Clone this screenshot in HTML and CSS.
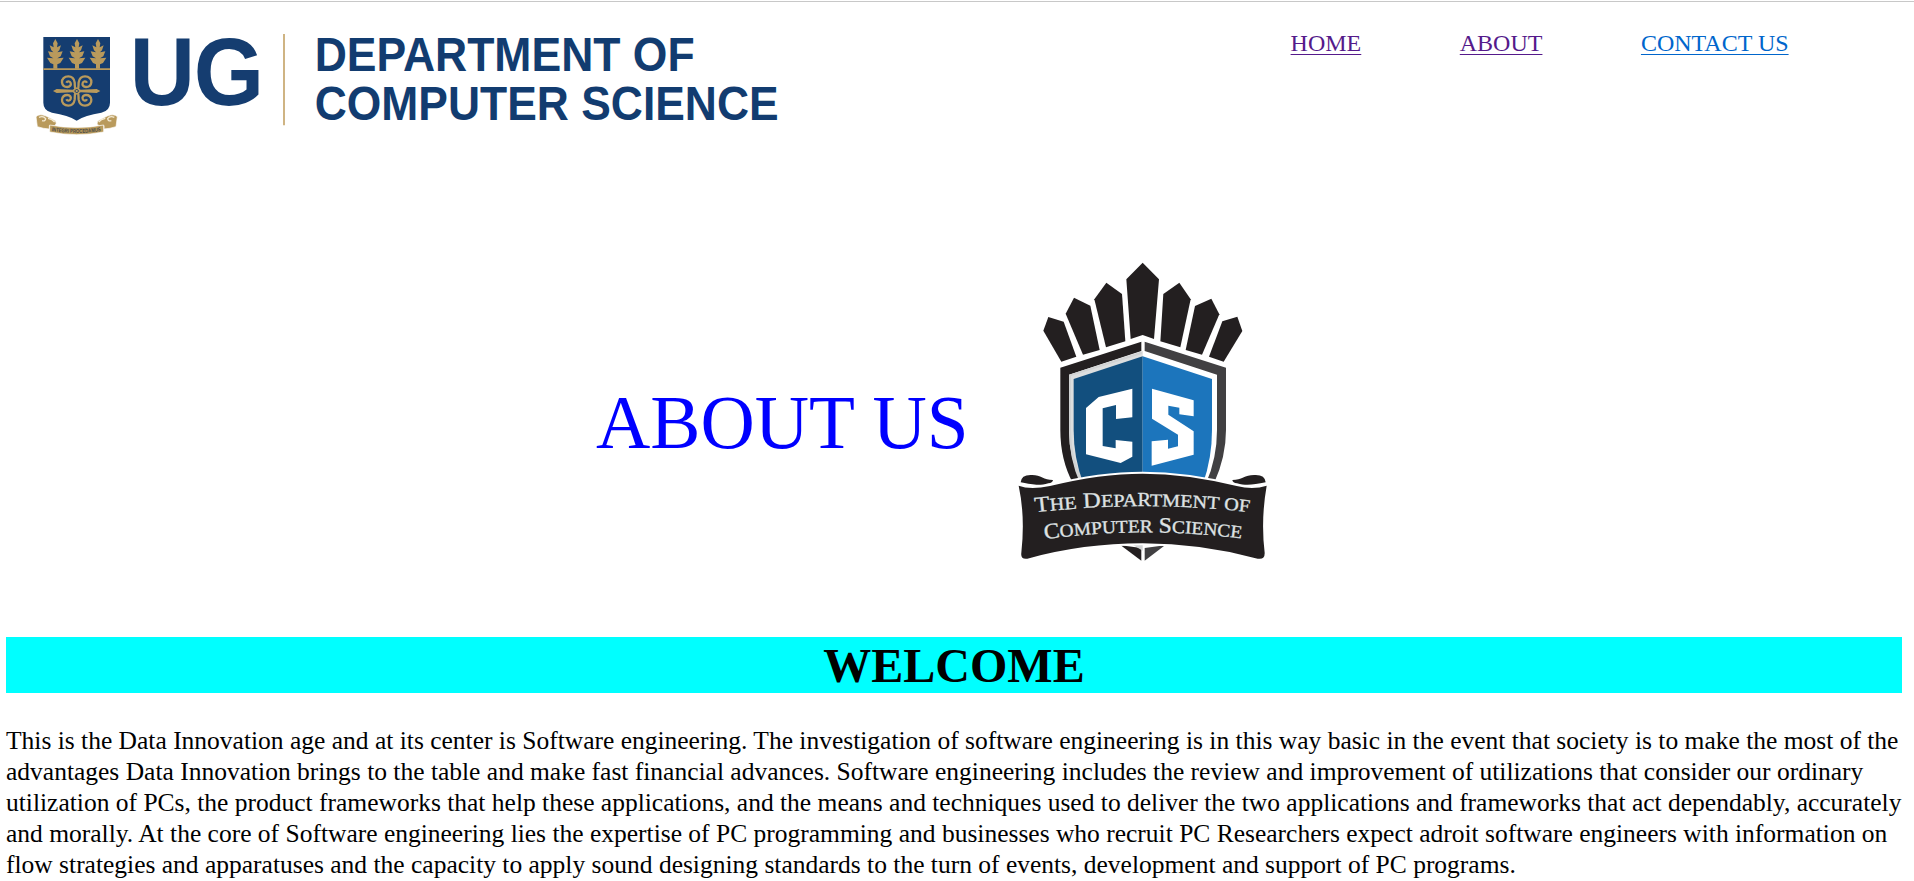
FILE: index.html
```html
<!DOCTYPE html>
<html lang="en">
<head>
<meta charset="utf-8">
<title>About Us</title>
<link rel="stylesheet" href="styles.css">
</head>
<body>
<header class="top">
  <svg class="brand" viewBox="0 0 2400 450" role="img" aria-label="UG Department of Computer Science">
    <path fill="#153d70" d="M130 111H330V308Q330 332 304 338Q255 345 230 362Q205 345 156 338Q130 332 130 308Z"/>
    <path fill="#b99a5c" d="M130 205H330V210H130Z"/>
    <defs>
      <g id="tree" fill="#b99a5c">
        <path d="M0 117L7 130L5 142L17 136L12 151L6 157L22 154L16 169L6 175L25 173L15 189L6 193V206H-6V193L-15 189L-25 173L-6 175L-16 169L-22 154L-6 157L-12 151L-17 136L-5 142L-7 130Z"/>
      </g>
      <path id="curl" d="M3 -4C7 -10 5 -18 6 -26C8 -38 16 -44 25 -44C37 -44 45 -36 44 -26C43 -17 36 -12 28 -12C20 -12 16 -18 18 -24C20 -30 28 -31 31 -25" fill="none" stroke="#b99a5c" stroke-width="7"/>
    </defs>
    <use href="#tree" x="166"/><use href="#tree" x="231"/><use href="#tree" x="294"/>
    <g transform="translate(230 273)">
      <use href="#curl"/><use href="#curl" transform="scale(-1 1)"/>
      <use href="#curl" transform="scale(1 -1)"/><use href="#curl" transform="scale(-1 -1)"/>
      <path d="M-71 0L-60 -6L-12 -4L0 -11L12 -4L60 -6L71 0L60 6L12 4L0 11L-12 4L-60 6Z" fill="#b99a5c"/>
      <path d="M0 -6L6 0L0 6L-6 0Z" fill="#b99a5c" stroke="#153d70" stroke-width="3"/>
    </g>
    <g stroke="#fff" stroke-width="2">
      <path fill="#b99a5c" d="M108 350Q118 340 138 348L166 362Q172 370 164 378L148 377V387Q130 386 112 380Z"/>
      <path fill="#b99a5c" d="M352 350Q342 340 322 348L294 362Q288 370 296 378L312 377V387Q330 386 348 380Z"/>
      <path fill="#b99a5c" d="M149 375Q230 390 311 375V396Q230 412 149 396Z"/>
    </g>
    <path d="M117 352Q130 346 137 356Q136 365 126 362M343 352Q330 346 323 356Q324 365 334 362M144 355Q157 357 164 366M316 355Q303 357 296 366" fill="none" stroke="#f4ead3" stroke-width="4"/>
    <path id="motto" fill="none" d="M155 393Q230 405 306 393"/>
    <text class="motto"><textPath href="#motto" textLength="148" lengthAdjust="spacingAndGlyphs">INTEGRI PROCEDAMUS</textPath></text>
    <text class="ug" x="0" y="0" transform="translate(389 315) scale(.935 1)">U</text>
    <text class="ug" x="0" y="0" transform="translate(581 315) scale(.935 1)">G</text>
    <path fill="#cfb483" d="M849 102H855V376H849Z"/>
    <text class="dept" x="944" y="214" textLength="1140" lengthAdjust="spacingAndGlyphs">DEPARTMENT OF</text>
    <text class="dept" x="944" y="359" textLength="1392" lengthAdjust="spacingAndGlyphs">COMPUTER SCIENCE</text>
  </svg>
  <nav class="links">
    <a class="visited" href="#home">HOME</a>
    <a class="visited" href="#about">ABOUT</a>
    <a href="#contact">CONTACT US</a>
  </nav>
</header>
<section class="hero">
  <span class="title">ABOUT US</span>
  <svg class="emblem" viewBox="0 0 870 960" role="img" aria-label="The Department of Computer Science">
    <g fill="#231f20">
      <path d="M145 201L191 215L229 320L184 335L130 242Z"/>
      <path d="M222 143L271 167L299 300L249 314L197 191Z"/>
      <path d="M319 98L366 132L376 274L318 292L283 148Z"/>
      <path d="M428 38L477 88L462 267L428 255L392 267L379 88Z"/>
      <path d="M538 98L572 148L541 292L481 274L490 132Z"/>
      <path d="M634 146L658 193L606 314L557 300L585 168Z"/>
      <path d="M712 200L727 243L671 335L627 320L667 214Z"/>
      <path d="M424 275V303L207 374V540Q207 625 245 700H219Q181 630 181 540V353Z"/>
    </g>
    <path fill="#414042" d="M434 275V303L651 374V540Q651 625 618 700H642Q678 620 678 540V353Z"/>
    <path fill="#d1d3d4" d="M428 303L207 374V540Q207 625 240 700H250L235 400L428 330Z"/>
    <path fill="#fff" d="M213 378L428 311V690H250Q213 625 213 540Z" opacity=".25"/>
    <path fill="#124f7e" d="M221 387L428 319V700H250Q221 625 221 540Z"/>
    <path fill="#1c75bc" d="M428 319L636 387V540Q636 625 609 700H428Z"/>
    <path fill="#fff" d="M296 441L397 416V502L348 507V465L308 475V588L347 595V570L397 575V620L362 639L258 613V474Z"/>
    <path fill="#fff" d="M456 416L581 451V499L538 493V473L505 467V494L581 544V614L455 647V574L504 569V596L534 589V554L456 506Z"/>
    <path fill="#231f20" d="M362 886L424 894V932Z"/>
    <path fill="#414042" d="M434 894L495 886L434 932Z"/>
    <path fill="#d1d3d4" d="M398 884L428 902V884Z"/>
    <path fill="#231f20" stroke="#fff" stroke-width="12" paint-order="stroke" d="M56 707Q90 720 150 708Q300 671 428 671Q560 671 710 708Q760 720 800 707Q782 810 794 908Q795 930 773 926Q600 880 428 880Q250 880 82 926Q61 929 64 908Q76 800 56 707Z"/>
    <path fill="#231f20" d="M62 697Q64 674 94 675C122 674 130 690 159 690Q158 699 145 700C116 708 100 704 62 697Z"/>
    <path fill="#231f20" d="M797 697Q795 674 765 675C735 674 726 690 697 690Q698 699 711 700C740 708 760 704 797 697Z"/>
    <path id="row1" fill="none" d="M106 787Q430 750 754 787"/>
    <path id="row2" fill="none" d="M134 868Q430 827 726 866"/>
    <text class="ribbon"><textPath href="#row1" textLength="644" lengthAdjust="spacingAndGlyphs">T<tspan class="sm">HE</tspan> D<tspan class="sm">EPARTMENT OF</tspan></textPath></text>
    <text class="ribbon"><textPath href="#row2" textLength="592" lengthAdjust="spacingAndGlyphs">C<tspan class="sm">OMPUTER</tspan> S<tspan class="sm">CIENCE</tspan></textPath></text>
  </svg>
</section>
<h1 class="welcome">WELCOME</h1>
<p class="copy">This is the Data Innovation age and at its center is Software engineering. The investigation of software engineering is in this way basic in the event that society is to make the most of the<br>
advantages Data Innovation brings to the table and make fast financial advances. Software engineering includes the review and improvement of utilizations that consider our ordinary<br>
utilization of PCs, the product frameworks that help these applications, and the means and techniques used to deliver the two applications and frameworks that act dependably, accurately<br>
and morally. At the core of Software engineering lies the expertise of PC programming and businesses who recruit PC Researchers expect adroit software engineers with information on<br>
flow strategies and apparatuses and the capacity to apply sound designing standards to the turn of events, development and support of PC programs.</p>
</body>
</html>
```
FILE: styles.css
```css
* { box-sizing: border-box; }
html { background: #fff; }
body {
  margin: 0;
  padding-top: 1px;
  font-family: "Liberation Serif", "Times New Roman", serif;
  color: #000;
}
.top {
  display: flex;
  align-items: flex-start;
  height: 249px;
  border-top: 1px solid #c8c8c8;
}
.brand { display: block; width: 800px; height: 150px; margin-top: -2px; flex: none; overflow: visible; }
.motto { font: bold 17px "Liberation Sans", Arial, sans-serif; fill: #4b4a45; }
.ug { font: bold 290px "Liberation Sans", Arial, sans-serif; fill: #153d70; }
.dept { font: bold 143px "Liberation Sans", Arial, sans-serif; fill: #123c70; }
.links {
  display: flex;
  gap: 98.5px;
  margin: 27px 0 0 490.6px;
  font-size: 24px;
  line-height: 28px;
  white-space: nowrap;
}
.links a { color: #0066cc; text-decoration-thickness: 1px; text-underline-offset: 3px; }
.links .visited { color: #551a8b; }
.hero { display: flex; align-items: flex-start; height: 387px; padding-left: 596px; }
.title {
  width: 404px;
  padding-top: 130px;
  font-size: 75.2px;
  line-height: 86px;
  color: #00f;
  white-space: nowrap;
}
.emblem { display: block; width: 290px; height: 320px; flex: none; overflow: visible; }
.ribbon { font: 66px "Liberation Serif", serif; fill: #dfe2e3; stroke: #dfe2e3; stroke-width: 1; }
.sm { font-size: 54px; }
.welcome {
  margin: 0 12px 0 6px;
  height: 56px;
  background: #0ff;
  font-size: 48px;
  line-height: 58px;
  text-align: center;
}
.copy {
  margin: 32px 0 0 6px;
  font-size: 25.51px;
  line-height: 31px;
  white-space: nowrap;
}
```
